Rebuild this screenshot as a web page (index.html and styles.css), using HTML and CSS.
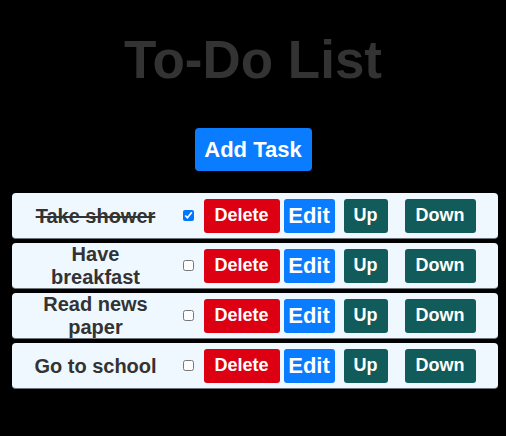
FILE: index.html
```html
<!DOCTYPE html>
<html>
<head>
<meta charset="utf-8">
<link rel="stylesheet" href="styles.css">
</head>
<body>
<h1 class="title">To-Do List</h1>
<div class="add-wrap"><button class="add-btn">Add Task</button></div>
<ul class="list">
  <li class="row">
    <span class="task done">Take shower</span>
    <input type="checkbox" class="check" checked>
    <button class="btn del">Delete</button>
    <button class="btn edit">Edit</button>
    <button class="btn up">Up</button>
    <button class="btn down">Down</button>
  </li>
  <li class="row">
    <span class="task">Have breakfast</span>
    <input type="checkbox" class="check">
    <button class="btn del">Delete</button>
    <button class="btn edit">Edit</button>
    <button class="btn up">Up</button>
    <button class="btn down">Down</button>
  </li>
  <li class="row">
    <span class="task">Read news paper</span>
    <input type="checkbox" class="check">
    <button class="btn del">Delete</button>
    <button class="btn edit">Edit</button>
    <button class="btn up">Up</button>
    <button class="btn down">Down</button>
  </li>
  <li class="row">
    <span class="task">Go to school</span>
    <input type="checkbox" class="check">
    <button class="btn del">Delete</button>
    <button class="btn edit">Edit</button>
    <button class="btn up">Up</button>
    <button class="btn down">Down</button>
  </li>
</ul>
</body>
</html>
```
FILE: styles.css
```css
html, body {
  background: #000;
}
body {
  margin: 8px;
  font-family: "Liberation Sans", Arial, sans-serif;
}
.title {
  margin: 22px 0 0;
  height: 60px;
  line-height: 60px;
  font-size: 53px;
  font-weight: bold;
  color: #333;
  text-align: center;
}
.add-wrap {
  display: flex;
  justify-content: center;
  margin-top: 38px;
}
.add-btn {
  font-family: inherit;
  font-size: 22px;
  font-weight: bold;
  color: #fff;
  background: #0a7cff;
  border: none;
  border-radius: 4px;
  height: 43px;
  width: 117px;
  padding: 0;
}
.list {
  list-style: none;
  margin: 22px 0 0 4px;
  padding: 0;
  width: 486px;
}
.row {
  display: flex;
  align-items: center;
  height: 45px;
  background: #f0f8ff;
  border-radius: 4px;
  border-bottom: 1px solid #6d7378;
  margin-bottom: 4px;
}
.task {
  width: 128px;
  margin-left: 19.5px;
  padding-top: 1px;
  text-align: center;
  font-size: 20px;
  line-height: 23px;
  font-weight: bold;
  color: #333;
}
.task.done {
  text-decoration: line-through;
}
.check {
  margin: 0 0 0 23px;
  width: 11px;
  height: 11px;
}
.btn {
  font-family: inherit;
  font-weight: bold;
  color: #fff;
  border: none;
  border-radius: 3px;
  height: 34px;
  padding: 0;
  text-align: center;
  font-size: 18px;
}
.del {
  background: #dc0012;
  width: 76px;
  margin-left: 10px;
}
.edit {
  background: #0a7cff;
  width: 51px;
  margin-left: 4px;
  font-size: 22px;
}
.up {
  background: #125b5b;
  width: 44px;
  margin-left: 9px;
}
.down {
  background: #125b5b;
  width: 71px;
  margin-left: 17px;
}
```
